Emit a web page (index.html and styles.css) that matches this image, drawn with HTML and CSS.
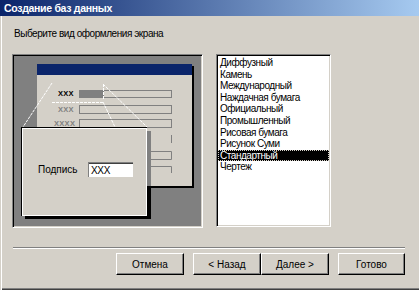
FILE: index.html
```html
<!DOCTYPE html>
<html lang="ru">
<head>
  <meta charset="UTF-8" />
  <title>Создание баз данных</title>
  <link rel="stylesheet" href="styles.css">
</head>
<body>
  <div class="window">
    <div class="titlebar">Создание баз данных</div>
    <div class="content">
      <div class="prompt">Выберите вид оформления экрана</div>

      <div class="main">
        <!-- preview of the selected style -->
        <div class="preview">
          <div class="preview-canvas">
            <svg class="preview-art" width="187" height="170" viewBox="0 0 187 170">
              <rect x="25" y="10" width="155" height="122" fill="#000"/>
              <rect x="23" y="8" width="155" height="122" fill="#d4d0c8"/>
              <rect x="23" y="8" width="155" height="11" fill="#0a246a"/>

              <text x="44" y="40" class="xxx bold">XXX</text>
              <rect x="65" y="34" width="25" height="8" fill="#808080"/>
              <rect x="65.5" y="34.5" width="92" height="7" fill="none" stroke="#808080"/>

              <text x="44" y="56" class="xxx">XXX</text>
              <rect x="65.5" y="49.5" width="92" height="8" fill="none" stroke="#808080"/>

              <text x="40" y="70" class="xxx">XXXX</text>
              <rect x="65.5" y="63.5" width="92" height="8" fill="none" stroke="#808080"/>

              <path d="M157.5 79 V87" stroke="#808080" fill="none"/>
              <path d="M137 95.5 H157.5 V103.5 H137" stroke="#808080" fill="none"/>
              <path d="M137 110.5 H157.5 V117" stroke="#808080" fill="none"/>

              <rect x="11" y="75" width="126" height="88" fill="#000"/>
              <rect x="133" y="75" width="4" height="55" fill="#808080"/>

              <g stroke="#fff" stroke-dasharray="3 1" fill="none">
                <path d="M38 27 L9 71"/>
                <path d="M38 46.5 H89"/>
                <path d="M89.5 28 V44"/>
                <path d="M89 28 L133 71"/>
                <path d="M89 46 L101 71"/>
              </g>
            </svg>

            <div class="popup">
              <span class="popup-label">Подпись</span>
              <span class="popup-input">XXX</span>
            </div>
          </div>
        </div>

        <ul class="styles-list">
          <li>Диффузный</li>
          <li>Камень</li>
          <li>Международный</li>
          <li>Наждачная бумага</li>
          <li>Официальный</li>
          <li>Промышленный</li>
          <li>Рисовая бумага</li>
          <li>Рисунок Суми</li>
          <li class="selected">Стандартный</li>
          <li>Чертеж</li>
        </ul>
      </div>

      <div class="separator"></div>

      <div class="buttons">
        <button class="btn btn-cancel">Отмена</button>
        <button class="btn">&lt; Назад</button>
        <button class="btn">Далее &gt;</button>
        <button class="btn btn-finish">Готово</button>
      </div>
    </div>
  </div>
</body>
</html>
```

FILE: styles.css
```css
:root {
  --face: #d4d0c8;
  --shadow: #808080;
  --dark: #404040;
  --title-from: #0a246a;
  --title-to: #a6caf0;
}

html, body {
  margin: 0;
  padding: 0;
  background: var(--face);
  font-family: "Liberation Sans", Arial, sans-serif;
  font-size: 10px;
  color: #000;
}

.window {
  width: 419px;
  height: 290px;
  background: var(--face);
  display: flex;
  flex-direction: column;
  overflow: hidden;
}

.titlebar {
  height: 16px;
  line-height: 16px;
  padding-left: 4px;
  background: linear-gradient(to right, var(--title-from), var(--title-to));
  color: #fff;
  font-weight: bold;
  font-size: 10.5px;
  letter-spacing: -0.3px;
}

.content {
  flex: 1;
  box-shadow: inset 1px 0 0 var(--face), inset 2px 0 0 #fff,
    inset 0 -1px 0 var(--dark), inset 0 -2px 0 var(--shadow);
}

.prompt {
  margin: 12px 0 0 14px;
  height: 12px;
  line-height: 12px;
  letter-spacing: -0.45px;
}

.main {
  display: flex;
  margin: 14px 0 0 12px;
}

/* sunken frame, win2000 style */
.preview,
.styles-list {
  box-sizing: border-box;
  border: 1px solid;
  border-color: var(--shadow) #fff #fff var(--shadow);
  box-shadow: inset 1px 1px 0 #000, inset -1px -1px 0 var(--face);
}

.preview {
  width: 191px;
  height: 174px;
  background: var(--shadow);
}

.preview-canvas {
  position: relative;
  width: 187px;
  height: 170px;
  margin: 1px;
}

.preview-art {
  display: block;
}

.xxx {
  font-family: "Liberation Sans", Arial, sans-serif;
  font-size: 7.5px;
  letter-spacing: 0.3px;
  fill: var(--shadow);
  font-weight: bold;
}

.xxx.bold {
  fill: #000;
}

.popup {
  position: absolute;
  left: 7px;
  top: 71px;
  width: 126px;
  height: 89px;
  box-sizing: border-box;
  background: var(--face);
  border-top: 1px solid #000;
  border-left: 1px solid #000;
  box-shadow: inset 1px 1px 0 #fff, inset -1px -1px 0 #fff;
  display: flex;
  align-items: center;
  padding: 0 0 6px 16px;
}

.popup-label {
  width: 50px;
  font-size: 10px;
}

.popup-input {
  width: 45px;
  height: 15px;
  box-sizing: border-box;
  background: #fff;
  border-top: 1px solid var(--shadow);
  border-left: 1px solid var(--shadow);
  box-shadow: inset 0 1px 0 var(--dark);
  padding: 2px 0 0 2px;
  font-size: 10px;
  line-height: 12px;
  letter-spacing: -0.3px;
}

.styles-list {
  list-style: none;
  margin: 0 0 0 13px;
  padding: 2px 1px;
  width: 115px;
  height: 173px;
  background: #fff;
}

.styles-list li {
  height: 11.6px;
  line-height: 11.6px;
  padding-left: 2px;
  white-space: nowrap;
  letter-spacing: -0.45px;
}

.styles-list li.selected {
  background: #000;
  color: #fff;
  outline: 1px dotted #d4d0c8;
  outline-offset: -1px;
}

.separator {
  margin: 19px 0 0 13px;
  width: 392px;
  border-top: 1px solid var(--shadow);
  border-bottom: 1px solid #fff;
}

.buttons {
  display: flex;
  margin: 4px 0 0 116px;
}

.btn {
  width: 68px;
  height: 22px;
  box-sizing: border-box;
  padding: 0;
  background: var(--face);
  border: 1px solid;
  border-color: #fff #000 #000 #fff;
  box-shadow: inset -1px -1px 0 var(--shadow);
  font-family: inherit;
  font-size: 10px;
  color: #000;
}

.btn-cancel {
  margin-right: 9px;
}

.btn-finish {
  width: 67px;
  margin-left: 9px;
}
```
